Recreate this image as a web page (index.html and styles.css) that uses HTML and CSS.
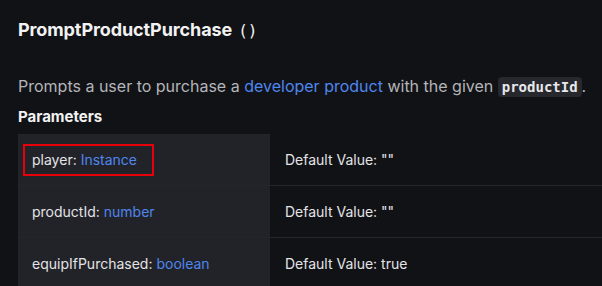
FILE: index.html
```html
<!DOCTYPE html>
<html>
<head>
<meta charset="utf-8">
<link rel="stylesheet" href="styles.css">
</head>
<body>
<main class="doc">
  <h2 class="title">PromptProductPurchase <span class="parens">()</span></h2>
  <p class="desc">Prompts a user to purchase a <a class="link">developer product</a> with the given <code class="code">productId</code>.</p>
  <h3 class="section">Parameters</h3>
  <div class="params">
    <div class="row">
      <div class="name-cell"><span class="highlight">player: <span class="type">Instance</span></span></div>
      <div class="value-cell">Default Value: ""</div>
    </div>
    <div class="row">
      <div class="name-cell"><span>productId: <span class="type">number</span></span></div>
      <div class="value-cell">Default Value: ""</div>
    </div>
    <div class="row">
      <div class="name-cell"><span>equipIfPurchased: <span class="type">boolean</span></span></div>
      <div class="value-cell">Default Value: true</div>
    </div>
  </div>
</main>
</body>
</html>
```
FILE: styles.css
```css
html, body {
  margin: 0;
  padding: 0;
  background: #111216;
}
body {
  font-family: "Inter", "Noto Sans", sans-serif;
  color: #e4e4e6;
  overflow: hidden;
}
.doc {
  padding: 16px 0 0 18px;
}
.title {
  margin: 0;
  font-size: 18px;
  font-weight: 700;
  line-height: 28px;
  color: #f2f2f3;
  letter-spacing: -0.1px;
}
.parens {
  font-family: "DejaVu Sans Mono", monospace;
  font-weight: 400;
  font-size: 16px;
  margin-left: 2px;
}
.desc {
  margin: 29px 0 0 0;
  font-size: 16px;
  line-height: 24px;
  color: #b4b5b9;
}
.link {
  color: #4f86ee;
  text-decoration: none;
}
.code {
  font-family: "DejaVu Sans Mono", monospace;
  font-size: 14px;
  font-weight: 700;
  color: #e8e8ea;
  background: #27282d;
  border-radius: 4px;
  padding: 2px 4px;
}
.section {
  margin: 6px 0 0 0;
  font-size: 15px;
  font-weight: 700;
  line-height: 24px;
  color: #f2f2f3;
}
.params {
  margin-top: 5px;
  width: 584px;
}
.row {
  display: grid;
  grid-template-columns: 252px 1fr;
  height: 51px;
  border-bottom: 1px solid #25262b;
}
.name-cell {
  background: #222328;
  display: flex;
  align-items: center;
  padding-left: 14px;
  font-size: 14px;
  color: #e4e4e6;
}
.value-cell {
  display: flex;
  align-items: center;
  padding-left: 15px;
  font-size: 14px;
  color: #e4e4e6;
}
.type {
  color: #4f86ee;
}
.highlight {
  display: inline-block;
  line-height: 28px;
  height: 28px;
  outline: 2px solid #e8000b;
  padding: 0 15px 0 7px;
  margin-left: -7px;
  margin-top: 1px;
}
```
